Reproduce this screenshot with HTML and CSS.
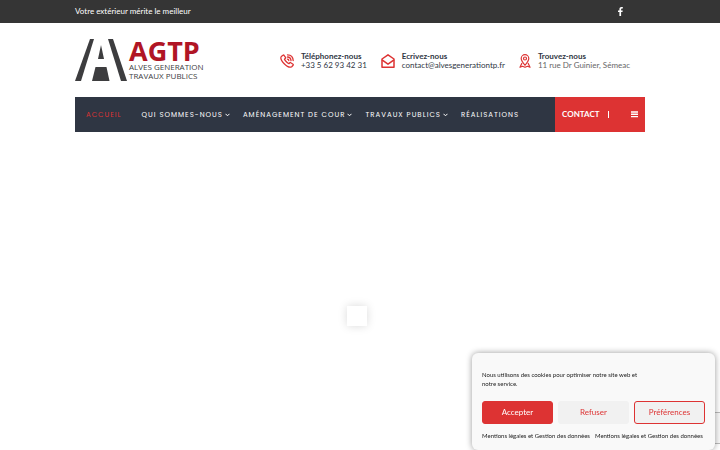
FILE: index.html
```html
<!DOCTYPE html>
<html lang="fr">
<head>
    <meta charset="UTF-8">
    <meta name="viewport" content="width=device-width, initial-scale=1.0">
    <title>AGTP - Alves Generation Travaux Publics</title>
    <link rel="stylesheet" href="styles.css">
</head>
<body>
    <div class="topbar">
        <div class="container topbar-inner">
            <span>Votre extérieur mérite le meilleur</span>
            <a class="social" href="#" aria-label="Facebook">
                <svg width="5" height="9" viewBox="0 0 5 9"><path d="M4.8.1v1.5h-.9c-.6 0-.8.3-.8.8v1h1.6l-.2 1.6H3.100V9H1.400V5H0V3.400h1.400V2.200C1.400.8 2.300 0 3.500 0z" fill="#fff"/></svg>
            </a>
        </div>
    </div>

    <header class="container header">
        <a class="logo" href="#">
            <svg class="logo-mark" width="52" height="43" viewBox="0 0 52 43" fill="#3d3d3f">
                <path d="M15 0h4L6 42H0z"/>
                <path d="M33 0h5l14 42h-6z"/>
                <path d="M26 6l3 14h-6z"/>
                <path d="M20.500 28h11l3 14H17z"/>
            </svg>
            <span class="logo-text">
                <strong>AGTP</strong>
                <span>ALVES GENERATION</span>
                <span>TRAVAUX PUBLICS</span>
            </span>
        </a>
        <ul class="infos">
            <li>
                <svg width="14" height="14" viewBox="0 0 14 14" fill="none" stroke="#dd3333" stroke-width="1.300" stroke-linecap="round" stroke-linejoin="round">
                    <path d="M3 1.200L1.300 2.500C.3 4 1.500 7 4.200 9.700s5.800 4 7.500 3l1.400-1.500c.3-.4.2-.7-.1-1L10.800 8.700c-.4-.3-.7-.2-1 .1l-.9.9C7.500 9.200 5 6.700 4.500 5.200l.9-.9c.3-.3.4-.6.1-1L4 1.300c-.3-.3-.7-.3-1-.1z"/>
                    <path d="M7.500.8c3.300.1 5.600 2.400 5.700 5.700M7.500 3c2 .1 3.400 1.500 3.500 3.500M7.500 5.200c.8 0 1.300.5 1.300 1.300"/>
                </svg>
                <div><strong>Téléphonez-nous</strong><span>+33 5 62 93 42 31</span></div>
            </li>
            <li>
                <svg width="14" height="14" viewBox="0 0 14 14" fill="none" stroke="#dd3333" stroke-width="1.500" stroke-linejoin="round">
                    <path d="M1 5l6-4.200L13 5v8.200H1z"/>
                    <path d="M1 5.800l6 4.400 6-4.400"/>
                </svg>
                <div><strong>Ecrivez-nous</strong><span>contact@alvesgenerationtp.fr</span></div>
            </li>
            <li>
                <svg width="12" height="14" viewBox="0 0 12 14" fill="none" stroke="#dd3333" stroke-width="1.200" stroke-linejoin="round">
                    <path d="M6 11.200C4 8.800 2.200 6.700 2.200 4.500a3.800 3.800 0 0 1 7.600 0C9.800 6.700 8 8.800 6 11.200z"/>
                    <circle cx="6" cy="4.500" r="1.500"/>
                    <path d="M3 9l-2 4.300 2.500-1 2.500 1 2.500-1 2.500 1L9 9"/>
                </svg>
                <div><strong>Trouvez-nous</strong><span class="address">11 rue Dr Guinier, Sémeac</span></div>
            </li>
        </ul>
    </header>

    <nav class="container navbar">
        <ul class="menu">
            <li><a class="active" href="#">ACCUEIL</a></li>
            <li><a class="parent" href="#">QUI SOMMES-NOUS<svg width="5" height="4" viewBox="0 0 5 4"><path d="M.5.8l2 2 2-2" fill="none" stroke="#fff"/></svg></a></li>
            <li><a class="parent" href="#">AMÉNAGEMENT DE COUR<svg width="5" height="4" viewBox="0 0 5 4"><path d="M.5.8l2 2 2-2" fill="none" stroke="#fff"/></svg></a></li>
            <li><a class="parent" href="#">TRAVAUX PUBLICS<svg width="5" height="4" viewBox="0 0 5 4"><path d="M.5.8l2 2 2-2" fill="none" stroke="#fff"/></svg></a></li>
            <li><a href="#">RÉALISATIONS</a></li>
        </ul>
        <div class="nav-extra">
            <a class="contact" href="#">CONTACT</a>
            <button class="toggle" type="button" aria-label="Menu">
                <svg width="7" height="7" viewBox="0 0 7 7"><path d="M0 1h7M0 3.300h7M0 5.600h7" stroke="#fff" stroke-width="1.400"/></svg>
            </button>
        </div>
    </nav>

    <main class="slider">
        <div class="loader"></div>
    </main>

    <div class="captcha"></div>

    <div class="cookies" role="dialog" aria-label="Cookies">
        <p>Nous utilisons des cookies pour optimiser notre site web et notre service.</p>
        <div class="cookie-buttons">
            <button class="accept" type="button">Accepter</button>
            <button class="deny" type="button">Refuser</button>
            <button class="prefs" type="button">Préférences</button>
        </div>
        <div class="cookie-links">
            <a href="#">Mentions légales et Gestion des données</a>
            <a href="#">Mentions légales et Gestion des données</a>
        </div>
    </div>
</body>
</html>
```
FILE: styles.css
```css
* {
    box-sizing: border-box;
}
body {
    margin: 0;
    min-height: 100vh;
    display: flex;
    flex-direction: column;
    font-family: Lato, "Liberation Sans", sans-serif;
    font-size: 8px;
    line-height: 9px;
    color: #2f3643;
    background: #fff;
}
a {
    color: inherit;
    text-decoration: none;
}
ul {
    list-style: none;
    margin: 0;
    padding: 0;
}
svg {
    display: block;
    flex: none;
}
button {
    font: inherit;
    cursor: pointer;
}
.container {
    width: 100%;
    max-width: 570px;
    margin: 0 auto;
}

/* Top bar */
.topbar {
    background: #353535;
    color: #fff;
}
.topbar-inner {
    display: flex;
    align-items: center;
    justify-content: space-between;
    padding: 7px 0;
}
.social {
    margin-right: 22px;
}

/* Header */
.header {
    display: flex;
    align-items: center;
    justify-content: space-between;
    padding: 16px 15px 15px 0;
}
.logo {
    display: flex;
    gap: 2px;
}
.logo-text {
    display: flex;
    flex-direction: column;
    font-family: "Open Sans", "Noto Sans", sans-serif;
    color: #3d3d3f;
}
.logo-text strong {
    font-size: 27px;
    line-height: 23px;
    color: #b01525;
}
.infos {
    display: flex;
    gap: 14px;
}
.infos li {
    display: flex;
    align-items: center;
    gap: 7px;
}
.infos strong,
.infos span {
    display: block;
}
.infos .address {
    color: #666;
}

/* Navigation */
.navbar {
    display: flex;
    justify-content: space-between;
    background: #2f3643;
    color: #fff;
}
.menu {
    display: flex;
    align-items: center;
    gap: 20px;
    padding: 13px 11px;
    font-family: Poppins, Inter, sans-serif;
    font-size: 7px;
    letter-spacing: 1px;
    white-space: nowrap;
}
.menu .active {
    color: #dd3333;
}
.menu .parent {
    display: flex;
    align-items: center;
    gap: 2px;
    margin-right: -7px;
}
.nav-extra {
    display: flex;
    align-items: center;
    justify-content: space-between;
    width: 90px;
    padding: 0 7px;
    background: #dd3333;
}
.contact {
    padding-right: 8px;
    border-right: 1px solid #fff;
    font-weight: bold;
    line-height: 7px;
}
.toggle {
    padding: 0;
    border: 0;
    background: none;
}

/* Slider */
.slider {
    flex: 1;
    display: flex;
    align-items: flex-start;
    justify-content: center;
    padding-top: 174px;
}
.loader {
    width: 20px;
    height: 20px;
    margin-right: 7px;
    background: #fff;
    box-shadow: 0 0 10px rgba(0, 0, 0, 0.15);
}

/* Cookie banner and badge */
.captcha {
    position: fixed;
    right: 0;
    bottom: 6px;
    width: 35px;
    height: 32px;
    background: #f9f9f9;
    border: 1px solid #bbb;
    border-right: 0;
}
.cookies {
    position: fixed;
    right: 5px;
    bottom: 0;
    width: 243px;
    padding: 17px 10px 10px;
    background: #f9f9f9;
    border-radius: 6px;
    box-shadow: 0 0 6px rgba(0, 0, 0, 0.4);
    font-size: 6px;
    color: #222;
}
.cookies p {
    max-width: 160px;
    margin: 0 0 13px;
}
.cookie-buttons {
    display: grid;
    grid-template-columns: repeat(3, 1fr);
    gap: 5px;
    margin-bottom: 7px;
}
.cookie-buttons button {
    height: 23px;
    padding: 0;
    border: 1px solid #f1f1f1;
    border-radius: 3px;
    background: #f1f1f1;
    color: #dd3333;
    font-size: 8px;
}
.cookie-buttons .accept {
    background: #dd3333;
    border-color: #dd3333;
    color: #fff;
}
.cookie-buttons .prefs {
    border-color: #dd3333;
}
.cookie-links {
    display: flex;
    gap: 5px;
    white-space: nowrap;
}
```
